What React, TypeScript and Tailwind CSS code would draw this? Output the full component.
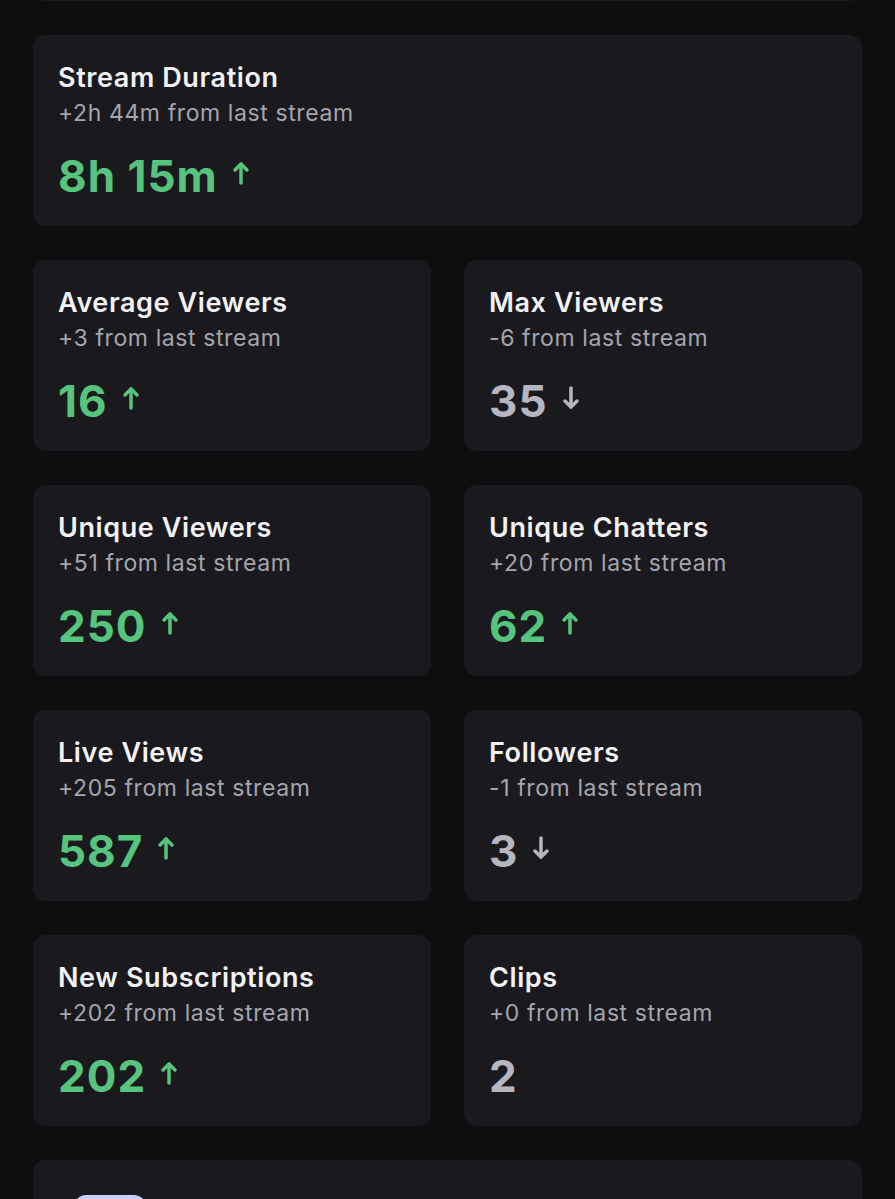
import React from "react";

type Stat = { title: string; sub: string; value: string; dir: "up" | "down" | "none" };

const stats: Stat[] = [
  { title: "Average Viewers", sub: "+3 from last stream", value: "16", dir: "up" },
  { title: "Max Viewers", sub: "-6 from last stream", value: "35", dir: "down" },
  { title: "Unique Viewers", sub: "+51 from last stream", value: "250", dir: "up" },
  { title: "Unique Chatters", sub: "+20 from last stream", value: "62", dir: "up" },
  { title: "Live Views", sub: "+205 from last stream", value: "587", dir: "up" },
  { title: "Followers", sub: "-1 from last stream", value: "3", dir: "down" },
  { title: "New Subscriptions", sub: "+202 from last stream", value: "202", dir: "up" },
  { title: "Clips", sub: "+0 from last stream", value: "2", dir: "none" },
];

function Arrow({ dir }: { dir: "up" | "down" }) {
  return (
    <svg width="18" height="24" viewBox="0 0 18 24" fill="none" stroke="currentColor" strokeWidth="3.5" strokeLinecap="round" strokeLinejoin="round" className="ml-[14px] mt-[-6px]">
      {dir === "up" ? (
        <>
          <path d="M9 22V3" />
          <path d="M3 9L9 3l6 6" />
        </>
      ) : (
        <>
          <path d="M9 2v19" />
          <path d="M3 15L9 21l6-6" />
        </>
      )}
    </svg>
  );
}

function Card({ s }: { s: Stat }) {
  const color = s.dir === "up" ? "text-[#56c47d]" : "text-[#b6b6c0]";
  return (
    <div className="h-[191px] rounded-[13px] bg-[#1a1a1e] px-[25px] pt-[26px]">
      <div className="text-[27px] leading-[34px] font-semibold tracking-[0.6px] text-[#f2f2f4]">{s.title}</div>
      <div className="mt-[3px] text-[23px] leading-[30px] tracking-[0.6px] text-[#a5a5ae]">{s.sub}</div>
      <div className={`mt-[24px] flex items-center text-[44px] leading-[48px] font-bold tracking-[1px] ${color}`}>
        <span>{s.value}</span>
        {s.dir !== "none" && <Arrow dir={s.dir} />}
      </div>
    </div>
  );
}

export default function App() {
  return (
    <div
      className="h-[1199px] overflow-hidden bg-[#0e0e10] px-[33px]"
      style={{ fontFamily: "Inter, 'Noto Sans', sans-serif" }}
    >
      <div className="flex flex-col gap-[34px]">
        <div className="-mt-[190px] h-[191px] rounded-[13px] bg-[#1a1a1e]" />
        <Card s={{ title: "Stream Duration", sub: "+2h 44m from last stream", value: "8h 15m", dir: "up" }} />
        <div className="grid grid-cols-2 gap-x-[33px] gap-y-[34px]">
          {stats.map((s) => (
            <Card key={s.title} s={s} />
          ))}
        </div>
        <div className="h-[191px] rounded-[13px] bg-[#1a1a1e] px-[41px] pt-[35px]">
          <div className="h-[40px] w-[72px] rounded-[12px] bg-[#c5cff7]" />
        </div>
      </div>
    </div>
  );
}
